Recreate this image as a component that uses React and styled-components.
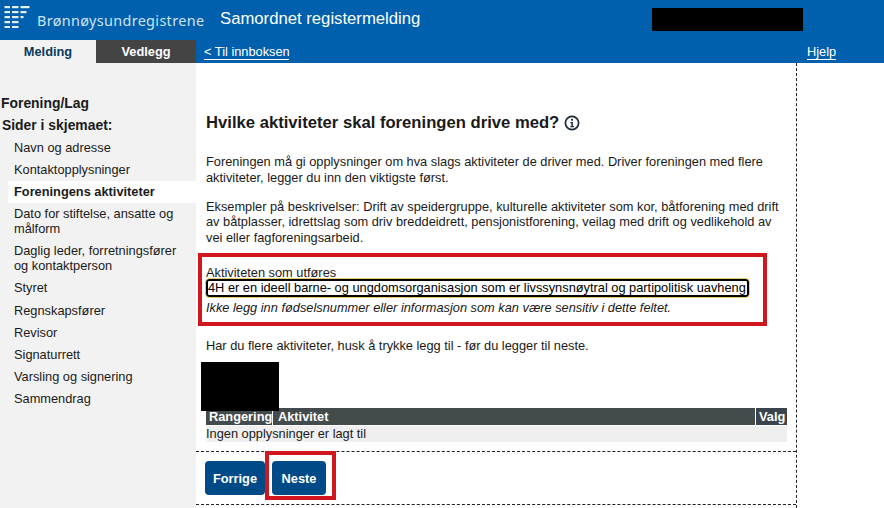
import React from 'react';
import styled, { createGlobalStyle } from 'styled-components';

const Global = createGlobalStyle`
  html, body { margin: 0; padding: 0; background: #fff; }
  body { font-family: "Liberation Sans", Arial, sans-serif; font-size: 12.8px; color: #1a1a1a; }
`;

const Page = styled.div`
  position: relative;
  width: 884px;
  height: 508px;
  overflow: hidden;
`;

const Header = styled.header`
  height: 40px;
  background: #0060ae;
  display: flex;
  align-items: flex-start;
  color: #fff;
`;

const Logo = styled.svg`
  width: 30px;
  height: 24px;
  margin: 5px 0 0 4px;
  flex: none;
`;

const Brand = styled.span`
  font-family: "Noto Sans", sans-serif;
  font-size: 14.4px;
  margin: 12px 0 0 3px;
  line-height: 18px;
  color: #cfe2f3;
  letter-spacing: 0.35px;
  width: 183px;
  flex: none;
`;

const AppTitle = styled.span`
  font-size: 16.7px;
  line-height: 18px;
  margin-top: 10px;
`;

const NavBar = styled.nav`
  height: 23px;
  background: #0060ae;
  display: flex;
`;

const Tab = styled.div`
  width: ${(p) => p.$width}px;
  height: 23px;
  flex: none;
  text-align: center;
  font-weight: bold;
  line-height: 23px;
  background: ${(p) => (p.$active ? '#f2f2f2' : '#444')};
  color: ${(p) => (p.$active ? '#0a3a5c' : '#fff')};
`;

const NavLink = styled.a`
  color: #fff;
  line-height: 14px;
  height: 14px;
  margin-top: 5px;
  border-bottom: 1px solid #fff;
`;

const BackLink = styled(NavLink)`
  margin-left: 8px;
  width: 85px;
  white-space: nowrap;
`;

const HelpLink = styled(NavLink)`
  margin-left: 518px;
`;

const Body = styled.div`
  display: flex;
  height: 445px;
`;

const Sidebar = styled.aside`
  width: 196px;
  flex: none;
  background: #f2f2f2;
  padding-top: 32px;
  box-sizing: border-box;
`;

const SideTitle = styled.div`
  font-weight: bold;
  font-size: 13.9px;
  line-height: 16px;
  margin-left: 1px;
`;

const SideHeading = styled.div`
  font-weight: bold;
  font-size: 13.9px;
  line-height: 16px;
  margin: 6px 0 4px 2px;
`;

const SideItem = styled.div`
  margin-left: 8px;
  padding: 3px 6px 4.1px 6px;
  line-height: 15px;
  background: ${(p) => (p.$active ? '#fff' : 'transparent')};
  font-weight: ${(p) => (p.$active ? 'bold' : 'normal')};
`;

const Main = styled.main`
  width: 601px;
  flex: none;
  box-sizing: border-box;
  border-right: 1px dashed #222;
  display: flex;
  flex-direction: column;
`;

const Content = styled.div`
  padding: 50px 10px 0;
  height: 389px;
  box-sizing: border-box;
  border-bottom: 1px dashed #222;
`;

const Heading = styled.h1`
  margin: 0 0 21px;
  font-size: 16.65px;
  line-height: 20px;
  font-weight: bold;
  display: flex;
  align-items: center;
  gap: 5px;
`;

const InfoIcon = styled.svg`
  width: 16px;
  height: 16px;
`;

const Para = styled.p`
  margin: 0 0 13.5px;
  line-height: 15.5px;
  width: 575px;
`;

const Field = styled.div`
  margin: 20.5px 0 23px;
`;

const FieldLabel = styled.div`
  line-height: 13px;
`;

const FieldInput = styled.div`
  box-sizing: border-box;
  width: 543px;
  height: 18px;
  line-height: 14px;
  white-space: nowrap;
  border: 2px solid #000;
  border-radius: 3px;
  outline: 1px solid #e8c96a;
  color: #000;
`;

const FieldHint = styled.div`
  font-style: italic;
  line-height: 15px;
  margin-top: 3px;
`;

const Table = styled.div`
  margin-top: 55px;
  width: 581px;
`;

const TableHead = styled.div`
  display: flex;
  height: 17px;
  background: #444b4c;
  color: #fff;
  font-weight: bold;
  line-height: 17px;
`;

const HeadCell = styled.div`
  box-sizing: border-box;
  width: ${(p) => (p.$width ? `${p.$width}px` : 'auto')};
  flex: ${(p) => (p.$width ? 'none' : 1)};
  padding-left: ${(p) => p.$pad || 3}px;
  border-left: ${(p) => (p.$divider ? '1px solid #fff' : 'none')};
  background: ${(p) => (p.$dark ? '#3a444c' : 'transparent')};
`;

const EmptyRow = styled.div`
  height: 16px;
  margin-top: 1px;
  line-height: 16px;
  background: #efefef;
`;

const Actions = styled.div`
  height: 53px;
  box-sizing: border-box;
  border-bottom: 1px dashed #222;
  padding: 9px 9px 0;
  display: flex;
  gap: 7px;
`;

const Button = styled.button`
  height: 34px;
  width: ${(p) => p.$width}px;
  padding: 0;
  border: 0;
  border-radius: 4px;
  background: #004a87;
  color: #fff;
  font-family: inherit;
  font-size: 12.8px;
  font-weight: bold;
`;

const RedBox = styled.div`
  position: absolute;
  box-sizing: border-box;
  border: 4px solid #d2161e;
  left: ${(p) => p.$x}px;
  top: ${(p) => p.$y}px;
  width: ${(p) => p.$w}px;
  height: ${(p) => p.$h}px;
`;

const Redaction = styled.div`
  position: absolute;
  background: #000;
  left: ${(p) => p.$x}px;
  top: ${(p) => p.$y}px;
  width: ${(p) => p.$w}px;
  height: ${(p) => p.$h}px;
`;

const pages = [
  { label: 'Navn og adresse' },
  { label: 'Kontaktopplysninger' },
  { label: 'Foreningens aktiviteter', active: true },
  { label: 'Dato for stiftelse, ansatte og målform' },
  { label: 'Daglig leder, forretningsfører og kontaktperson' },
  { label: 'Styret' },
  { label: 'Regnskapsfører' },
  { label: 'Revisor' },
  { label: 'Signaturrett' },
  { label: 'Varsling og signering' },
  { label: 'Sammendrag' },
];

export default function App() {
  return (
    <Page>
      <Global />
      <Header>
        <Logo viewBox="0 0 30 24" fill="#e4eff8">
          <rect x="0.5" y="1" width="5.5" height="2.2" />
          <rect x="8" y="1" width="6.5" height="2.2" />
          <rect x="16.5" y="1" width="9" height="2.2" />
          <rect x="0.5" y="6" width="5.5" height="2.2" />
          <rect x="8" y="6" width="6.5" height="2.2" />
          <rect x="16.5" y="6" width="6" height="2.2" />
          <rect x="0.5" y="11" width="5.5" height="2.2" />
          <rect x="8" y="11" width="6.5" height="2.2" />
          <rect x="16.5" y="11" width="3" height="2.2" />
          <rect x="0.5" y="16" width="5.5" height="2.2" />
          <rect x="8" y="16" width="6.5" height="2.2" />
          <rect x="0.5" y="21" width="5.5" height="2" />
          <rect x="8" y="21" width="6.5" height="2" />
        </Logo>
        <Brand>Brønnøysundregistrene</Brand>
        <AppTitle>Samordnet registermelding</AppTitle>
      </Header>
      <NavBar>
        <Tab $width={96} $active>Melding</Tab>
        <Tab $width={100}>Vedlegg</Tab>
        <BackLink>&lt; Til innboksen</BackLink>
        <HelpLink>Hjelp</HelpLink>
      </NavBar>
      <Body>
        <Sidebar>
          <SideTitle>Forening/Lag</SideTitle>
          <SideHeading>Sider i skjemaet:</SideHeading>
          {pages.map((page) => (
            <SideItem key={page.label} $active={page.active}>{page.label}</SideItem>
          ))}
        </Sidebar>
        <Main>
          <Content>
            <Heading>
              Hvilke aktiviteter skal foreningen drive med?
              <InfoIcon viewBox="0 0 16 16" fill="none">
                <circle cx="8" cy="8" r="6.6" stroke="#1a2a3a" strokeWidth="1.7" />
                <rect x="7.1" y="3.8" width="1.9" height="1.9" fill="#1a2a3a" />
                <path d="M6.4 7h2.5v4h1v1.2H6.4V11h1V8.2h-1z" fill="#1a2a3a" />
              </InfoIcon>
            </Heading>
            <Para>
              Foreningen må gi opplysninger om hva slags aktiviteter de driver med. Driver foreningen med flere aktiviteter, legger du inn den viktigste først.
            </Para>
            <Para>
              Eksempler på beskrivelser: Drift av speidergruppe, kulturelle aktiviteter som kor, båtforening med drift av båtplasser, idrettslag som driv breddeidrett, pensjonistforening, veilag med drift og vedlikehold av vei eller fagforeningsarbeid.
            </Para>
            <Field>
              <FieldLabel>Aktiviteten som utføres</FieldLabel>
              <FieldInput>4H er en ideell barne- og ungdomsorganisasjon som er livssynsnøytral og partipolitisk uavheng</FieldInput>
              <FieldHint>Ikke legg inn fødselsnummer eller informasjon som kan være sensitiv i dette feltet.</FieldHint>
            </Field>
            <Para>Har du flere aktiviteter, husk å trykke legg til - før du legger til neste.</Para>
            <Table>
              <TableHead>
                <HeadCell $width={66}>Rangering</HeadCell>
                <HeadCell $divider $pad={5}>Aktivitet</HeadCell>
                <HeadCell $width={32} $divider $dark>Valg</HeadCell>
              </TableHead>
              <EmptyRow>Ingen opplysninger er lagt til</EmptyRow>
            </Table>
          </Content>
          <Actions>
            <Button $width={60}>Forrige</Button>
            <Button $width={54}>Neste</Button>
          </Actions>
        </Main>
      </Body>
      <RedBox $x={198} $y={253} $w={569} $h={73} />
      <RedBox $x={265} $y={451} $w={71} $h={49} />
      <Redaction $x={652} $y={8} $w={151} $h={23} />
      <Redaction $x={201} $y={362} $w={78} $h={49} />
    </Page>
  );
}
